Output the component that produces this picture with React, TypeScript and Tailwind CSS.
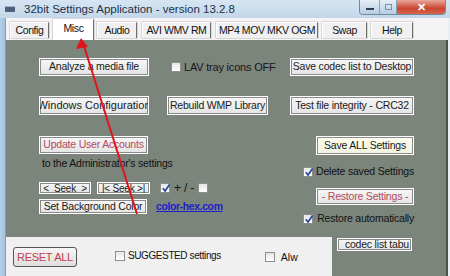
import React from "react";

const btn =
  "flex items-center justify-center whitespace-nowrap overflow-hidden border border-white bg-[linear-gradient(#f7f7f7,#e4e4e4)] shadow-[inset_0_0_0_1px_#8b8b8b] text-[10.5px] tracking-[-0.2px] text-[#1a1a1a]";

function Check({ on }: { on?: boolean }) {
  return (
    <span className="relative flex h-[10px] w-[10px] shrink-0 items-center justify-center border border-[#8e8e8e] bg-[linear-gradient(#e6e6e6,#ffffff)]">
      {on && (
        <svg viewBox="0 0 10 10" className="absolute left-[0px] top-[-1px] h-[10px] w-[10px]">
          <path d="M1.8 5.2 L4 8 L8.6 1.4" fill="none" stroke="#2c4c9c" strokeWidth="1.8" />
        </svg>
      )}
    </span>
  );
}

const tabs = [
  { label: "Config", w: "w-[39px]", ml: "ml-[4px]" },
  { label: "Misc", w: "w-[41px]", ml: "ml-[4px]", active: true },
  { label: "Audio", w: "w-[40px]", ml: "ml-[3px]" },
  { label: "AVI WMV RM", w: "w-[69px]", ml: "ml-[5px]" },
  { label: "MP4 MOV MKV OGM", w: "w-[102px]", ml: "ml-[5px]" },
  { label: "Swap", w: "w-[45px]", ml: "ml-[4px]" },
  { label: "Help", w: "w-[42px]", ml: "ml-[4px]" },
];

export default function App() {
  return (
    <div className="relative h-[276px] w-[450px] overflow-hidden bg-[#c9dbec] font-['Liberation_Sans',Arial,sans-serif] text-[#111]">
      {/* title bar */}
      <div className="flex h-[18px] items-start bg-[linear-gradient(#d6e5f3,#c3d7ea)]">
        <div className="ml-[5px] mt-[6px] h-[6px] w-[10px] rounded-[1px] bg-[#4a5f78] shadow-[inset_0_1px_0_#9fb4c9]" />
        <span className="ml-[9px] mt-[2px] text-[11.5px] leading-[14px] text-[#1c2f48]">
          32bit Settings Application - version 13.2.8
        </span>
        <div className="ml-auto mr-[4px] flex h-[15px] overflow-hidden rounded-b-[4px] border border-t-0 border-[#6f88a4]">
          <div className="flex w-[20px] items-center justify-center border-r border-[#8aa3bd] bg-[linear-gradient(#e6eef7,#b8cde2)]">
            <span className="mt-[3px] h-[2px] w-[8px] bg-[#2c3e55]" />
          </div>
          <div className="flex w-[17px] items-center justify-center border-r border-[#8aa3bd] bg-[linear-gradient(#e6eef7,#b8cde2)]">
            <span className="h-[6px] w-[7px] border border-[#7a90a8]" />
          </div>
          <div className="flex w-[48px] items-center justify-center bg-[linear-gradient(#e9a89a,#c9452f_60%,#d8654a)]">
            <span className="text-[11px] font-bold leading-none text-white">✕</span>
          </div>
        </div>
      </div>

      <div className="flex h-[258px]">
        <div className="w-[6px] bg-[linear-gradient(90deg,#b5cfe6,#9fc0de)] shadow-[inset_-1px_0_0_#7e9fbf]" />
        <div className="flex flex-1 flex-col">
          {/* tabs */}
          <div className="flex h-[22px] items-end bg-[#f4f4f4]">
            {tabs.map((t) => (
              <div
                key={t.label}
                className={`${t.w} ${t.ml} flex items-center justify-center whitespace-nowrap border border-b-0 border-l-white border-t-white border-r-[#6e6e6e] text-[10.5px] tracking-[-0.4px] shadow-[0_0_0_0.5px_#b8b8b8] ${
                  t.active ? "h-[21px] bg-white pb-[2px]" : "mb-[2px] h-[16px] bg-[#f0f0f0]"
                }`}
              >
                {t.label}
              </div>
            ))}
          </div>

          {/* main panel */}
          <div className="flex h-[197px] flex-col border-r-2 border-[#4b524b] bg-[#7c857c] pl-[33px] pr-[32px] pt-[18px] text-[10.5px] tracking-[-0.2px]">
            <div className="flex items-center">
              <div className={`${btn} h-[18px] w-[110px]`}>Analyze a media file</div>
              <span className="ml-[22px]">
                <Check />
              </span>
              <span className="ml-[3px] text-[11px] text-[#151515]">LAV tray icons OFF</span>
              <div className={`${btn} ml-auto h-[18px] w-[124px]`}>Save codec list to Desktop</div>
            </div>
            <div className="mt-[20px] flex items-center">
              <div className={`${btn} h-[19px] w-[110px] text-[11px] tracking-[0px]`}>Windows Configuration</div>
              <div className={`${btn} ml-[18px] h-[19px] w-[101px]`}>Rebuild WMP Library</div>
              <div className={`${btn} ml-auto h-[19px] w-[124px]`}>Test file integrity - CRC32</div>
            </div>

            <div className="mt-[21px] flex justify-between">
              <div className="flex w-[200px] flex-col items-start">
                <div className={`${btn} h-[18px] w-[109px] text-[#b2495b]`}>Update User Accounts</div>
                <div className="mt-[3px] whitespace-nowrap pl-[3px] leading-[12px]">to the Administrator's settings</div>
                <div className="mt-[13px] flex items-center">
                  <div className={`${btn} h-[12px] w-[52px] text-[10px]`}>&lt;&nbsp; Seek &nbsp;&gt;</div>
                  <div className={`${btn} ml-[6px] h-[12px] w-[53px] text-[10px]`}>|&lt; Seek &gt;|</div>
                  <span className="ml-[10px]">
                    <Check on />
                  </span>
                  <span className="ml-[4px] text-[12px] leading-[12px]">+ / -</span>
                  <span className="ml-[4px]">
                    <Check />
                  </span>
                </div>
                <div className="mt-[5px] flex items-center">
                  <div className={`${btn} h-[15px] w-[108px]`}>Set Background Color</div>
                  <span className="ml-[9px] font-bold tracking-[-0.4px] text-[#1d22c8] underline">color-hex.com</span>
                </div>
              </div>

              <div className="flex flex-col items-end">
                <div className={`${btn} h-[19px] w-[98px] bg-[linear-gradient(#fdfdf0,#f2f2e0)]`}>Save ALL Settings</div>
                <div className="mt-[11px] flex h-[12px] items-center">
                  <Check on />
                  <span className="ml-[3px]">Delete saved Settings</span>
                </div>
                <div className={`${btn} mt-[10px] h-[17px] w-[98px] text-[#b2495b]`}>- Restore Settings -</div>
                <div className="mt-[9px] flex h-[10px] items-center">
                  <Check on />
                  <span className="ml-[4px]">Restore automatically</span>
                </div>
              </div>
            </div>
          </div>

          {/* bottom */}
          <div className="flex h-[39px]">
            <div className="flex flex-1 items-start bg-[#f0f0f0] pl-[7px] pt-[10px] text-[10.5px]">
              <div className="flex h-[20px] w-[64px] items-center justify-center rounded-[3px] border border-[#555] bg-[linear-gradient(#f6f6f6,#dedede)] text-[11px] tracking-[-0.3px] text-[#c2404e]">
                RESET ALL
              </div>
              <span className="ml-[38px] mt-[4px]">
                <Check />
              </span>
              <span className="ml-[3px] mt-[4px] whitespace-nowrap text-[10px] leading-[10px] tracking-[-0.4px]">SUGGESTED settings</span>
              <span className="ml-[44px] mt-[5px]">
                <Check />
              </span>
              <span className="ml-[6px] mt-[5px] leading-[10px]">Alw</span>
            </div>
            <div className="w-[116px] border-r-2 border-[#4b524b] bg-[#7c857c] pl-[5px] pt-[1px]">
              <div className={`${btn} h-[13px] w-[75px] justify-end pr-[2px] text-[10.5px]`}>codec list tabu</div>
            </div>
          </div>
        </div>
        <div className="w-[2px] bg-[#e9eef3]" />
      </div>

      {/* red annotation arrow */}
      <svg className="pointer-events-none absolute left-0 top-0" width="450" height="276">
        <line x1="137" y1="214" x2="84" y2="46" stroke="#e0141c" strokeWidth="2" />
        <polygon points="81,38 76,49 88,47" fill="#e0141c" />
      </svg>
    </div>
  );
}
